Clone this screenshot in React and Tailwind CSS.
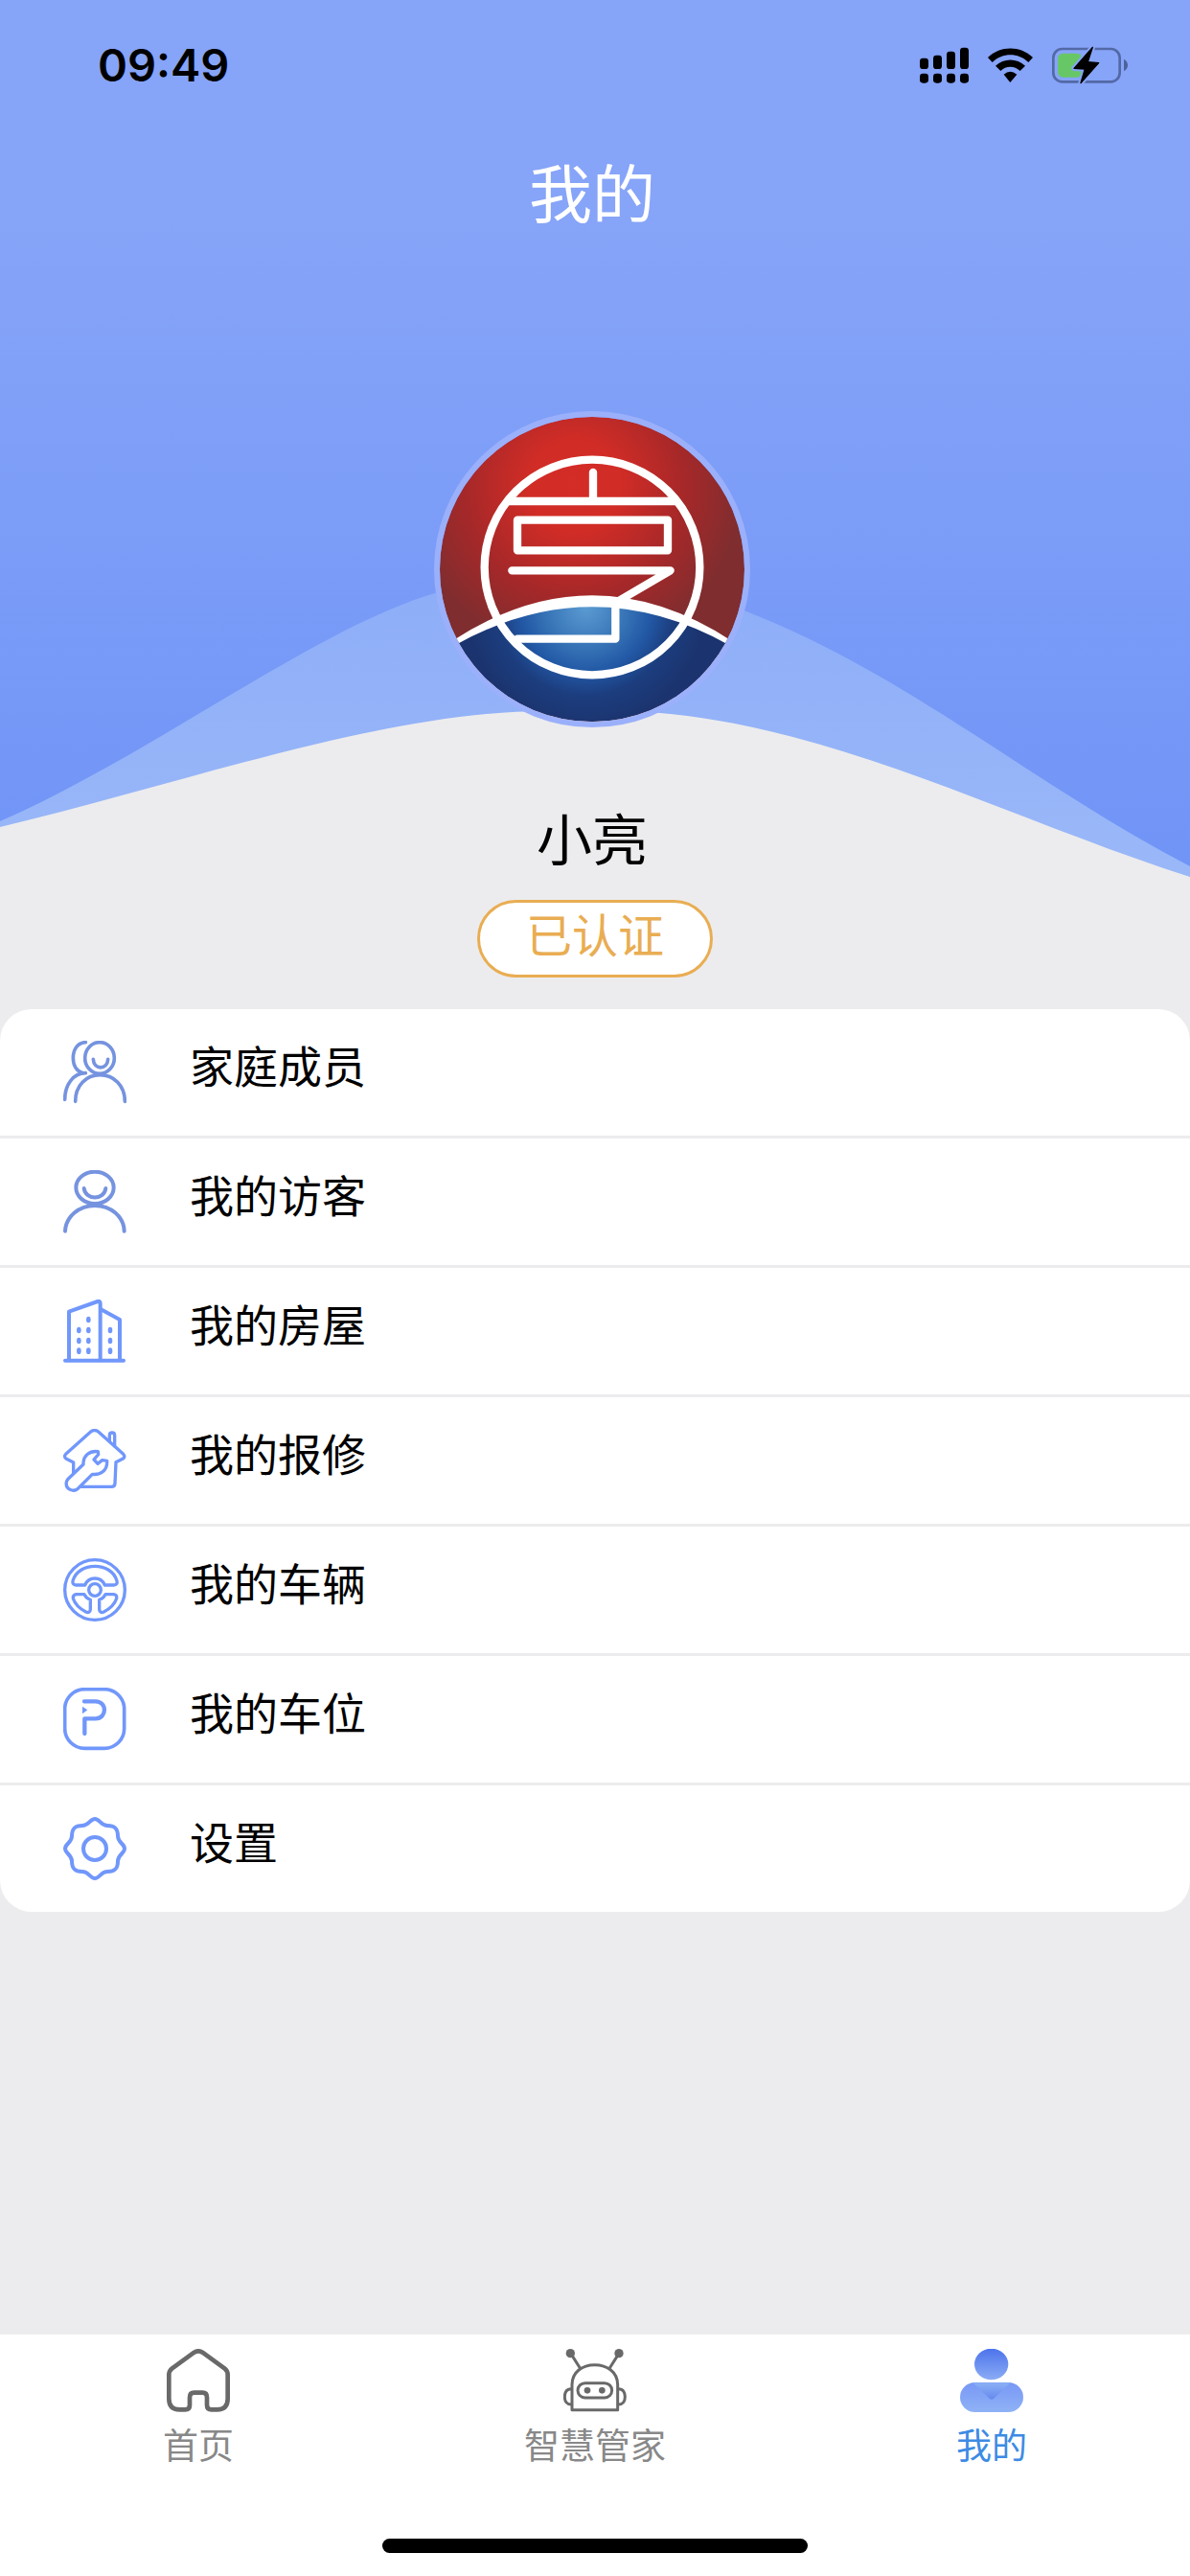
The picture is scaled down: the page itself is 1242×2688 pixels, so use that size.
import React, { useState } from "react";

function SignalIcon() {
  return (
    <svg viewBox="57 22 153 120" className="h-10 w-[51px]" fill="#000" aria-hidden="true">
      <rect x="57" y="60" width="27" height="34" rx="10" />
      <rect x="99" y="51" width="27" height="43" rx="10" />
      <rect x="141" y="39" width="27" height="55" rx="10" />
      <rect x="183" y="27" width="27" height="67" rx="10" />
      <rect x="57" y="108" width="27" height="30" rx="10" />
      <rect x="99" y="108" width="27" height="30" rx="10" />
      <rect x="141" y="108" width="27" height="30" rx="10" />
      <rect x="183" y="108" width="27" height="30" rx="10" />
    </svg>
  );
}

function WifiIcon() {
  return (
    <svg viewBox="273 22 147 120" className="h-10 w-[49px]" fill="#000" aria-hidden="true">
      <path d="M276 58C316 20 377 20 417 58L403 73C371 42 322 42 290 73Z" />
      <path d="M300 84C327 59 366 59 393 84L377 100C360 83 332 83 316 100Z" />
      <path d="M326 111Q346 93 367 111L346 136Z" />
    </svg>
  );
}

function BatteryIcon() {
  return (
    <svg viewBox="477 22 240 120" className="h-10 w-20" aria-hidden="true">
      <rect x="481" y="31" width="208" height="103" rx="28" fill="none" stroke="#5369a6" strokeWidth="8" />
      <path d="M702 63Q714 70 714 82T702 101Z" fill="#4d629c" />
      <rect x="495" y="45" width="76" height="75" rx="16" fill="#67c766" />
      <path
        d="M604 26L546 92L580 94L567 138L623 75L589 72Z"
        fill="#000"
        stroke="#86a4f8"
        strokeWidth="16"
        strokeLinejoin="round"
        paintOrder="stroke"
      />
      <path d="M604 26L546 92L580 94L567 138L623 75L589 72Z" fill="#000" stroke="#000" strokeWidth="4" strokeLinejoin="round" />
    </svg>
  );
}

function FamilyIcon() {
  return (
    <svg viewBox="0 0 198 198" className="size-[66px]" fill="none" stroke="#7593df" strokeWidth="11" strokeLinecap="round" aria-hidden="true">
      <ellipse cx="114" cy="54" rx="46" ry="49" />
      <path d="M94 58C96 92 138 92 140 58" />
      <path d="M38 190C38 140 72 107 115 107S193 140 193 190" />
      <path d="M70 5C44 6 31 28 31 54C31 82 46 97 62 101" />
      <path d="M70 101C30 101 5 140 5 184" />
    </svg>
  );
}

function VisitorIcon() {
  return (
    <svg viewBox="0 0 198 198" className="size-[66px]" fill="none" stroke="#7593df" strokeWidth="12" strokeLinecap="round" aria-hidden="true">
      <ellipse cx="99" cy="55" rx="59" ry="50" />
      <path d="M65 57C70 95 128 95 133 57" />
      <path d="M6 191C8 145 50 111 99 111S190 145 191 191" />
    </svg>
  );
}

function BuildingIcon() {
  return (
    <svg viewBox="0 0 198 198" className="size-[66px]" fill="none" stroke="#7197fb" strokeWidth="12" strokeLinecap="round" strokeLinejoin="round" aria-hidden="true">
      <path d="M6 191H189" />
      <path d="M18 190V38L108 6Q116 4 116 13V190" />
      <path d="M118 31L177 63V190" />
      <g stroke="none" fill="#7197fb">
        <ellipse cx="79" cy="63" rx="7" ry="10" />
        <ellipse cx="79" cy="96" rx="7" ry="10" />
        <ellipse cx="79" cy="129" rx="7" ry="10" />
        <ellipse cx="79" cy="161" rx="7" ry="10" />
        <ellipse cx="49" cy="96" rx="7" ry="10" />
        <ellipse cx="49" cy="129" rx="7" ry="10" />
        <ellipse cx="49" cy="161" rx="7" ry="10" />
        <ellipse cx="147" cy="96" rx="7" ry="10" />
        <ellipse cx="147" cy="129" rx="7" ry="10" />
        <ellipse cx="147" cy="161" rx="7" ry="10" />
      </g>
    </svg>
  );
}

function RepairIcon() {
  return (
    <svg viewBox="0 0 198 198" className="size-[66px]" fill="none" stroke="#7197fb" strokeWidth="10" strokeLinecap="round" strokeLinejoin="round" aria-hidden="true">
      <path d="M32 138V105L10 94Q0 87 8 79L86 9Q98 0 110 9L188 79Q196 87 186 94L165 104L162 170Q162 181 151 181H56" />
      <path d="M145 38V20Q145 12 153 12T161 20V54" />
      <path d="M16 156L63 111C62 84 82 68 109 71L110 80L96 96L108 109L122 98L137 100C139 130 117 145 91 142L50 183C34 202 6 190 10 167Q11 161 16 156Z" />
    </svg>
  );
}

function WheelIcon() {
  return (
    <svg viewBox="0 0 198 198" className="size-[66px]" fill="none" stroke="#7197fb" strokeWidth="10" strokeLinejoin="round" aria-hidden="true">
      <circle cx="99" cy="99" r="94" />
      <circle cx="99" cy="99" r="19" />
      <path d="M40 84H68C80 56 118 56 130 84H158Q171 83 168 71C152 10 46 10 30 71Q28 83 40 84Z" />
      <path d="M40 113H66Q72 126 85 130V160Q84 173 71 168Q40 152 31 126Q29 115 40 113Z" />
      <path d="M158 113H132Q126 126 113 130V160Q114 173 127 168Q158 152 167 126Q169 115 158 113Z" />
    </svg>
  );
}

function ParkingIcon() {
  return (
    <svg viewBox="0 0 198 198" className="size-[66px]" fill="none" stroke="#7197fb" strokeWidth="11" strokeLinecap="round" strokeLinejoin="round" aria-hidden="true">
      <rect x="5" y="5" width="186" height="185" rx="62" />
      <path d="M66 43H101C138 43 138 97 101 97H67V144" strokeWidth="13" />
      <path d="M60 59L76 70L60 82Z" fill="#7197fb" stroke="none" />
    </svg>
  );
}

function SettingIcon() {
  return (
    <svg viewBox="0 0 198 198" className="size-[66px]" fill="none" stroke="#7197fb" strokeWidth="12" strokeLinejoin="round" aria-hidden="true">
      <path d="M99 6C114 6 118 27 138 27C162 27 171 36 171 60C171 80 192 84 192 99C192 114 171 118 171 138C171 162 162 171 138 171C118 171 114 192 99 192C84 192 80 171 60 171C36 171 27 162 27 138C27 118 6 114 6 99C6 84 27 80 27 60C27 36 36 27 60 27C80 27 84 6 99 6Z" />
      <circle cx="99" cy="99" r="36" />
    </svg>
  );
}

function HomeIcon() {
  return (
    <svg viewBox="0 0 198 198" className="size-[66px]" fill="none" stroke="#696969" strokeWidth="14" strokeLinejoin="round" aria-hidden="true">
      <path d="M86 11L16 62Q7 69 7 82V156Q7 190 40 190H58Q72 190 72 176V152Q72 137 86 137H112Q126 137 126 152V176Q126 190 140 190H158Q191 190 191 156V82Q191 69 182 62L112 11Q99 3 86 11Z" />
    </svg>
  );
}

function RobotIcon() {
  return (
    <svg viewBox="0 0 198 198" className="size-[66px]" fill="none" stroke="#696969" strokeWidth="9" strokeLinejoin="round" aria-hidden="true">
      <path d="M28 22L54 63M169 22L143 63" />
      <path d="M27 191V112C27 72 60 50 98 50S170 72 170 112V191Z" />
      <rect x="45" y="107" width="107" height="46" rx="23" />
      <path d="M27 125C10 124 4 136 4 150S10 175 27 174M170 125C187 124 193 136 193 150S187 175 170 174" />
      <g fill="#696969" stroke="none">
        <circle cx="22" cy="14" r="14" />
        <circle cx="174" cy="14" r="14" />
        <circle cx="75" cy="130" r="10" />
        <circle cx="121" cy="130" r="10" />
      </g>
    </svg>
  );
}

function MineIcon() {
  return (
    <svg viewBox="0 0 198 198" className="size-[66px]" aria-hidden="true">
      <defs>
        <linearGradient id="mineHead" x1="0" y1="0" x2="0" y2="1">
          <stop offset="0" stopColor="#4c73eb" />
          <stop offset="1" stopColor="#8bacf5" />
        </linearGradient>
        <linearGradient id="mineBody" x1="0" y1="0" x2="0" y2="1">
          <stop offset="0" stopColor="#7898f5" />
          <stop offset="1" stopColor="#8fb2f6" />
        </linearGradient>
        <linearGradient id="mineCollar" x1="0" y1="0" x2="0" y2="1">
          <stop offset="0" stopColor="#8bb0f5" />
          <stop offset="1" stopColor="#6689ee" />
        </linearGradient>
      </defs>
      <ellipse cx="98" cy="48" rx="53" ry="49" fill="url(#mineHead)" />
      <rect x="0" y="105" width="198" height="93" rx="47" fill="url(#mineBody)" />
      <path d="M40 106H158L106 155Q99 161 92 155Z" fill="url(#mineCollar)" />
    </svg>
  );
}

function AvatarLogo() {
  return (
    <svg viewBox="57 74 954 954" className="size-full" role="img" aria-label="avatar">
      <defs>
        <radialGradient id="skyRed" gradientUnits="userSpaceOnUse" cx="480" cy="290" r="580">
          <stop offset="0" stopColor="#d42c27" />
          <stop offset="0.25" stopColor="#d12c26" />
          <stop offset="0.6" stopColor="#a52829" />
          <stop offset="0.9" stopColor="#802d2f" />
        </radialGradient>
        <radialGradient id="seaBlue" gradientUnits="userSpaceOnUse" cx="515" cy="670" r="370">
          <stop offset="0" stopColor="#5b9bd2" />
          <stop offset="0.3" stopColor="#3b79ba" />
          <stop offset="0.55" stopColor="#2258a5" />
          <stop offset="0.75" stopColor="#1c3d7e" />
          <stop offset="1" stopColor="#1b346f" />
        </radialGradient>
      </defs>
      <rect x="57" y="74" width="954" height="954" fill="url(#skyRed)" />
      <path d="M40 820Q534 500 1028 820V1040H40Z" fill="url(#seaBlue)" />
      <path d="M95 776Q534 490 972 776L962 788Q534 550 106 788Z" fill="#fff" />
      <g fill="none" stroke="#fff" strokeWidth="25" strokeLinecap="round" strokeLinejoin="round">
        <circle cx="534" cy="545" r="337" />
        <path d="M537 248V338M275 338H793" />
        <rect x="300" y="397" width="471" height="95" />
        <path d="M283 555H779L607 656V769H300" />
      </g>
    </svg>
  );
}

const menus = [
  { key: "family", label: "家庭成员", Icon: FamilyIcon },
  { key: "visitor", label: "我的访客", Icon: VisitorIcon },
  { key: "house", label: "我的房屋", Icon: BuildingIcon },
  { key: "repair", label: "我的报修", Icon: RepairIcon },
  { key: "car", label: "我的车辆", Icon: WheelIcon },
  { key: "parking", label: "我的车位", Icon: ParkingIcon },
  { key: "setting", label: "设置", Icon: SettingIcon },
];

const tabs = [
  { key: "home", label: "首页", Icon: HomeIcon },
  { key: "butler", label: "智慧管家", Icon: RobotIcon },
  { key: "mine", label: "我的", Icon: MineIcon },
];

export default function App() {
  const [activeTab, setActiveTab] = useState("mine");

  return (
    <div className="flex min-h-screen flex-col bg-[#ececee] font-['Noto_Sans_CJK_SC',sans-serif] text-black">
      <main className="flex-1">
        <section className="grid grid-cols-1 items-start">
          {/* Waves behind the profile */}
          <div className="col-start-1 row-start-1 h-[915px] bg-linear-to-b from-[#86a4f8] from-25% to-[#7094f7]">
            <svg viewBox="0 0 1242 915" preserveAspectRatio="none" className="size-full" aria-hidden="true">
              <defs>
                <linearGradient id="backWave" gradientUnits="userSpaceOnUse" x1="0" y1="600" x2="0" y2="915">
                  <stop offset="0" stopColor="#8dadf8" />
                  <stop offset="1" stopColor="#9ab8f8" />
                </linearGradient>
              </defs>
              <path d="M0 857C160 787 330 655 454 619C560 582 680 592 779 638C950 705 1080 820 1242 904V915H0Z" fill="url(#backWave)" />
              <path d="M0 863C190 818 400 742 570 742H640C840 742 1040 850 1242 915H0Z" fill="#ececee" />
            </svg>
          </div>

          <div className="col-start-1 row-start-1 flex flex-col">
            <div className="flex h-[132px] items-center justify-between pt-1 pr-16 pl-[102px]">
              <span className="font-[Inter,sans-serif] text-[47px] font-semibold">09:49</span>
              <div className="flex items-center gap-[19px]">
                <SignalIcon />
                <WifiIcon />
                <BatteryIcon />
              </div>
            </div>

            <div className="flex flex-col items-center pr-1.5">
              <h1 className="text-[66px] leading-[132px] text-white">我的</h1>
              <div className="mt-[165px] size-[330px] overflow-hidden rounded-full border-6 border-[#9bb0fa]">
                <div className="size-full overflow-hidden rounded-full">
                  <AvatarLogo />
                </div>
              </div>
              <p className="mt-[72px] text-[58px] leading-[84px]">小亮</p>
            </div>

            <div className="mt-6 mb-[33px] flex justify-center">
              <span className="rounded-full border-3 border-[#e9ad52] bg-white px-12 pb-3 text-5xl leading-[63px] text-[#e9ad52]">
                已认证
              </span>
            </div>
          </div>
        </section>

        <ul className="divide-y-3 divide-[#ececee] overflow-hidden rounded-[33px] bg-white">
          {menus.map(({ key, label, Icon }) => (
            <li key={key}>
              <a href={`#${key}`} className="flex items-center gap-[66px] px-[66px] py-6">
                <Icon />
                <span className="pb-[18px] text-[46px] leading-[66px]">{label}</span>
              </a>
            </li>
          ))}
        </ul>
      </main>

      <nav className="bg-white pt-[15px] pb-6">
        <div className="grid grid-cols-3">
          {tabs.map(({ key, label, Icon }) => (
            <button
              key={key}
              type="button"
              onClick={() => setActiveTab(key)}
              className={`flex flex-col items-center gap-1.5 text-[37px] leading-[54px] ${
                activeTab === key ? "text-[#3d8be4]" : "text-[#888888]"
              }`}
            >
              <Icon />
              <span>{label}</span>
            </button>
          ))}
        </div>
        <div className="mx-auto mt-[72px] h-[15px] w-[444px] rounded-full bg-black" />
      </nav>
    </div>
  );
}
